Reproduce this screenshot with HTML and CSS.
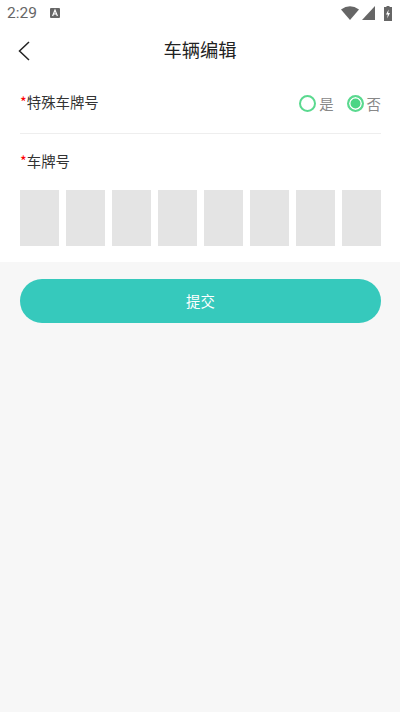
FILE: index.html
```html
<!DOCTYPE html>
<html lang="zh-CN">
<head>
  <meta charset="UTF-8">
  <meta name="viewport" content="width=device-width, initial-scale=1">
  <title>车辆编辑</title>
  <link rel="stylesheet" href="styles.css">
</head>
<body>

  <div class="top">
    <div class="status">
      <span class="time">2:29</span>
      <svg class="a-icon" width="10" height="10" viewBox="0 0 10 10">
        <rect width="10" height="10" rx="1" fill="#666"/>
        <path d="M2.6 8 5 2l2.4 6M3.5 6h3" fill="none" stroke="#fff" stroke-width="1.2"/>
      </svg>
      <span class="spacer"></span>
      <svg width="18" height="14" viewBox="0 0 18 14"><path d="M0 3.4Q9-2.8 18 3.4L9 14Z" fill="#666"/></svg>
      <svg class="signal" width="13" height="14" viewBox="0 0 13 14"><path d="M0 14 13 0v14Z" fill="#666"/></svg>
      <svg class="battery" width="8" height="15" viewBox="0 0 8 15">
        <path d="M2.5 0h3v1H8v14H0V1h2.5Z" fill="#666"/>
        <path d="M4.6 3.5 2 8.5h1.8L3.2 12.5 6 7H4.2Z" fill="#fff"/>
      </svg>
    </div>

    <div class="nav">
      <svg class="back" width="12" height="20" viewBox="0 0 12 20"><path d="M11 1 1.5 10 11 19" fill="none" stroke="#222" stroke-width="1.5"/></svg>
      <span class="nav-title">车辆编辑</span>
    </div>

    <div class="form">
      <div class="row">
        <span class="label"><i>*</i>特殊车牌号</span>
        <div class="radios">
          <span class="radio"><b class="dot"></b>是</span>
          <span class="radio"><b class="dot on"></b>否</span>
        </div>
      </div>

      <div class="plate-label"><span class="label"><i>*</i>车牌号</span></div>
      <div class="plates">
        <div class="cell"></div>
        <div class="cell"></div>
        <div class="cell"></div>
        <div class="cell"></div>
        <div class="cell"></div>
        <div class="cell"></div>
        <div class="cell"></div>
        <div class="cell"></div>
      </div>
    </div>
  </div>

  <div class="bottom">
    <button class="submit">提交</button>
  </div>

</body>
</html>
```

FILE: styles.css
```css
* {
  box-sizing: border-box;
}

body {
  margin: 0;
  height: 712px;
  display: flex;
  flex-direction: column;
  background: #f7f7f7;
  font-family: "Noto Sans CJK SC", "Noto Sans", sans-serif;
  overflow: hidden;
}

.top {
  background: white;
  height: 262px;
}

.status {
  height: 28px;
  padding: 0 8px 2px 7px;
  display: flex;
  align-items: center;
  color: #666;
}

.time {
  font-family: Roboto, sans-serif;
  font-size: 15.5px;
}

.a-icon {
  margin-left: 13px;
}

.spacer {
  flex: 1;
}

.signal {
  margin-left: 3px;
}

.battery {
  margin-left: 9px;
}

.nav {
  height: 46px;
  position: relative;
  text-align: center;
  line-height: 43px;
}

.back {
  position: absolute;
  left: 18px;
  top: 13px;
}

.nav-title {
  font-size: 18.3px;
  color: #222;
}

.form {
  padding: 0 19px 0 20px;
}

.row {
  height: 60px;
  display: flex;
  align-items: center;
  justify-content: space-between;
  border-bottom: 1px solid #eee;
}

.label {
  font-size: 14.4px;
  line-height: 16px;
  margin-top: -3px;
  color: #333;
}

.label i {
  color: red;
  font-style: normal;
}

.radios {
  display: flex;
  gap: 13px;
}

.radio {
  display: flex;
  align-items: center;
  gap: 3px;
  font-size: 14.4px;
  line-height: 17px;
  color: #888;
}

.dot {
  width: 17px;
  height: 17px;
  border: 2px solid #5ad98f;
  border-radius: 50%;
}

.dot.on {
  background: #4cd585;
  box-shadow: inset 0 0 0 1.5px white;
}

.plate-label {
  height: 56px;
  display: flex;
  align-items: center;
}

.plates {
  display: grid;
  grid-template-columns: repeat(8, 39px);
  justify-content: space-between;
}

.cell {
  height: 56px;
  background: #e4e4e4;
}

.bottom {
  padding: 17px 19px 0 20px;
}

.submit {
  width: 100%;
  height: 44px;
  padding-bottom: 2px;
  border: none;
  border-radius: 22px;
  background: #36c9bc;
  color: white;
  font-family: inherit;
  font-size: 14.4px;
}
```
